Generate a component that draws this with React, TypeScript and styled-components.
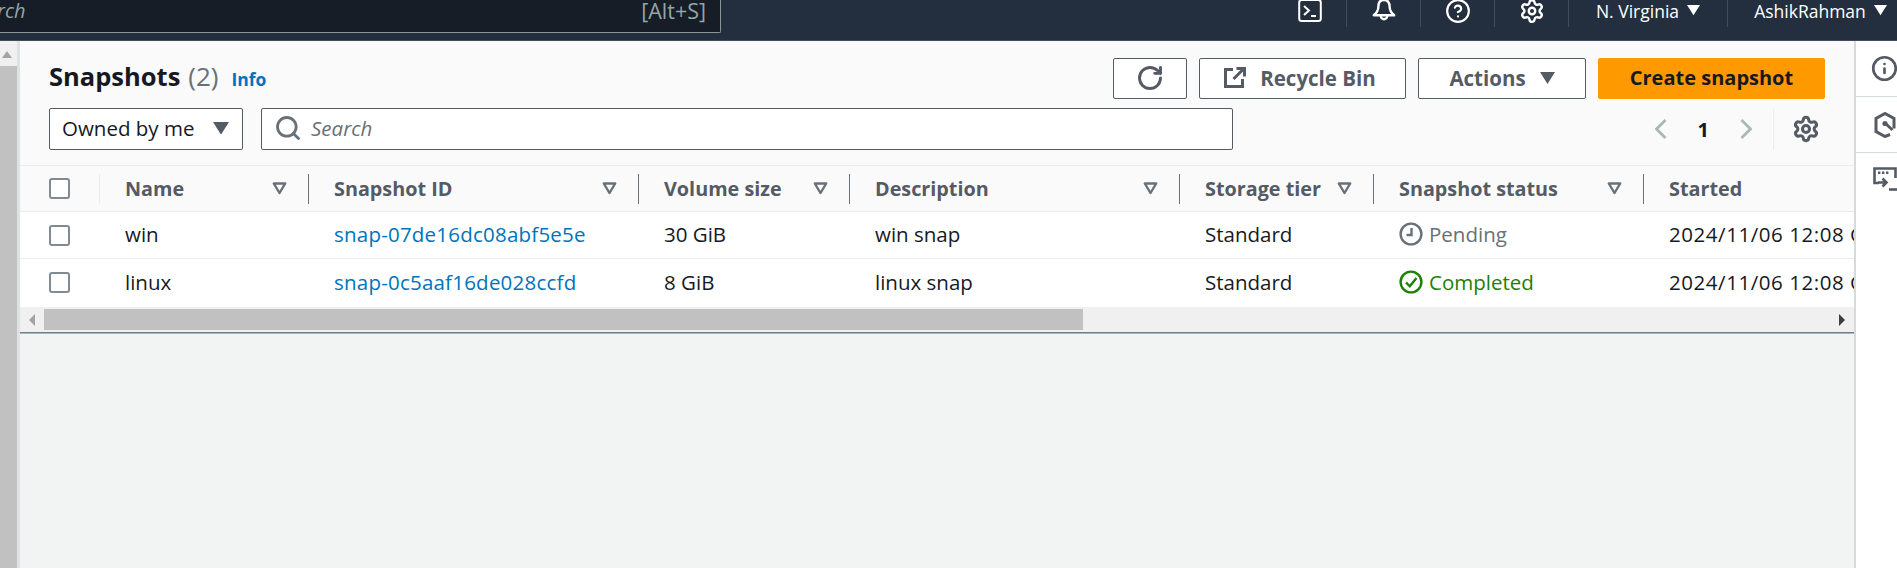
import React from "react";
import styled, { createGlobalStyle } from "styled-components";
import { RotateCw, Search, Settings, CircleHelp, Info } from "lucide-react";

const GlobalStyle = createGlobalStyle`
  html, body { margin: 0; padding: 0; height: 100%; background: #f2f3f3; }
  body { font-family: "Open Sans", "Noto Sans", sans-serif; overflow: hidden; }
  * { box-sizing: border-box; }
`;

const columns = [
  { title: "Name", width: 209, sortable: true },
  { title: "Snapshot ID", width: 330, sortable: true },
  { title: "Volume size", width: 211, sortable: true },
  { title: "Description", width: 330, sortable: true },
  { title: "Storage tier", width: 194, sortable: true },
  { title: "Snapshot status", width: 270, sortable: true },
  { title: "Started", width: 260, sortable: false },
];

const rows = [
  { name: "win", id: "snap-07de16dc08abf5e5e", size: "30 GiB", desc: "win snap", status: "pending" },
  { name: "linux", id: "snap-0c5aaf16de028ccfd", size: "8 GiB", desc: "linux snap", status: "completed" },
];

const Caret = ({ size = 14, color = "#545b64" }: { size?: number; color?: string }) => (
  <svg width={size} height={size * 0.8} viewBox="0 0 14 11">
    <path d="M0 0h14L7 11z" fill={color} />
  </svg>
);

const SortCaret = () => (
  <svg width="15" height="13" viewBox="0 0 15 13">
    <path d="M1.8 1.5h11.4L7.5 11z" fill="none" stroke="#687078" strokeWidth="2.4" strokeLinejoin="round" />
  </svg>
);

const PageChevron = ({ flip }: { flip?: boolean }) => (
  <svg width="12" height="20" viewBox="0 0 12 20" fill="none" stroke="#aab7b8" strokeWidth="2.8">
    <path d={flip ? "M1.5 1l9 9-9 9" : "M10.5 1l-9 9 9 9"} />
  </svg>
);

const TerminalIcon = () => (
  <svg width="24" height="24" viewBox="0 0 24 24" fill="none" stroke="#fff" strokeWidth="2">
    <rect x="1.2" y="1" width="21.6" height="21" rx="2.5" />
    <path d="M6 7l5 4.5L6 16M13 17h5" />
  </svg>
);

const BellIcon = () => (
  <svg width="24" height="24" viewBox="0 0 24 24" fill="none" stroke="#fff" strokeWidth="2.4">
    <path d="M12 1c-4 0-5.6 3-5.6 6.5 0 3.6-1.2 6-4.6 8.7h20.4c-3.4-2.7-4.6-5.1-4.6-8.7C17.6 4 16 1 12 1z" strokeLinejoin="round" />
    <path d="M8.8 17a3.2 3.2 0 0 0 6.4 0" />
  </svg>
);

const ExternalIcon = () => (
  <svg width="22" height="21" viewBox="0 0 22 21" fill="none" stroke="#545b64" strokeWidth="3">
    <path d="M9 2.5H1.5v17h17V12" />
    <path d="M9.5 12L19 2.5M12.5 1.5h8v8" />
  </svg>
);

const SnapshotPanelIcon = () => (
  <svg width="22" height="26" viewBox="0 0 22 26" fill="none" stroke="#545b64" strokeWidth="3">
    <path d="M16 22.5L11 24.5 2 19.5V6.5L11 1.5l9 5v10" />
    <path d="M11.5 11.5l7 6.5" />
    <circle cx="11" cy="11.5" r="2.6" fill="#545b64" stroke="none" />
  </svg>
);

const ShellPanelIcon = () => (
  <svg width="24" height="24" viewBox="0 0 24 24" fill="none" stroke="#545b64" strokeWidth="2.6">
    <path d="M6 16H1.5V1.5h21V11" />
    <path d="M5 15.5h8M9.5 11.5l4 4-4 4" />
    <path d="M16 22.5h8" />
    <path d="M5 5.8h2.4M9 5.8h2.4M13 5.8h2.4" strokeWidth="2.4" />
  </svg>
);

const ClockIcon = () => (
  <svg width="24" height="24" viewBox="0 0 24 24" fill="none" stroke="#687078" strokeWidth="2.4">
    <circle cx="12" cy="12" r="10.4" />
    <path d="M12.5 6v7H7.5" />
  </svg>
);

const CheckIcon = () => (
  <svg width="24" height="24" viewBox="0 0 24 24" fill="none" stroke="#1d8102" strokeWidth="2.4">
    <circle cx="12" cy="12" r="10.4" />
    <path d="M7 12.5l3.8 3.8L17.5 8" />
  </svg>
);

export default function App() {
  return (
    <>
      <GlobalStyle />
      <Page>
        <TopNav>
          <GlobalSearch>
            <SearchHint>rch</SearchHint>
            <Shortcut>[Alt+S]</Shortcut>
          </GlobalSearch>
          <NavActions>
            <NavIcon>
              <TerminalIcon />
            </NavIcon>
            <NavIcon>
              <BellIcon />
            </NavIcon>
            <NavIcon>
              <CircleHelp size={26} color="#fff" strokeWidth={2} />
            </NavIcon>
            <NavIcon>
              <Settings size={26} color="#fff" strokeWidth={2.2} />
            </NavIcon>
            <NavMenu $width={159}>
              N. Virginia <Caret size={13} color="#fff" />
            </NavMenu>
            <NavMenu $width={169} $last>
              AshikRahman <Caret size={13} color="#fff" />
            </NavMenu>
          </NavActions>
        </TopNav>
        <Body>
          <LeftScroll>
            <ScrollUp />
            <ScrollThumb />
          </LeftScroll>
          <Main>
            <Panel>
              <PanelHeader>
                <TitleRow>
                  <TitleBlock>
                    <Title>Snapshots</Title>
                    <Count>(2)</Count>
                    <InfoLink>Info</InfoLink>
                  </TitleBlock>
                  <Actions>
                    <Button $width={74}>
                      <RotateCw size={28} strokeWidth={2.5} />
                    </Button>
                    <RecycleButton $width={207} $size={20.5}>
                      <ExternalIcon />
                      Recycle Bin
                    </RecycleButton>
                    <Button $width={168} $size={20.5}>
                      Actions <Caret size={15} />
                    </Button>
                    <PrimaryButton>Create snapshot</PrimaryButton>
                  </Actions>
                </TitleRow>
                <FilterRow>
                  <OwnerSelect>
                    Owned by me <Caret size={16} />
                  </OwnerSelect>
                  <SearchBox>
                    <Search size={28} color="#687078" strokeWidth={2.4} />
                    <SearchPlaceholder>Search</SearchPlaceholder>
                  </SearchBox>
                  <Pager>
                    <PageChevron />
                    <PageNumber>1</PageNumber>
                    <PageChevron flip />
                    <PagerDivider />
                    <Settings size={28} color="#545b64" strokeWidth={2.6} />
                  </Pager>
                </FilterRow>
              </PanelHeader>
              <Table>
                <HeadRow>
                  <CheckCell $head>
                    <Checkbox />
                  </CheckCell>
                  {columns.map((col) => (
                    <HeadCell key={col.title} $width={col.width} $last={!col.sortable}>
                      {col.title}
                      {col.sortable && <SortCaret />}
                    </HeadCell>
                  ))}
                </HeadRow>
                {rows.map((row) => (
                  <Row key={row.id}>
                    <CheckCell>
                      <Checkbox />
                    </CheckCell>
                    <Cell $width={columns[0].width}>{row.name}</Cell>
                    <Cell $width={columns[1].width}>
                      <IdLink>{row.id}</IdLink>
                    </Cell>
                    <Cell $width={columns[2].width}>{row.size}</Cell>
                    <Cell $width={columns[3].width}>{row.desc}</Cell>
                    <Cell $width={columns[4].width}>Standard</Cell>
                    <Cell $width={columns[5].width}>
                      <Status $done={row.status === "completed"}>
                        {row.status === "completed" ? <CheckIcon /> : <ClockIcon />}
                        {row.status === "completed" ? "Completed" : "Pending"}
                      </Status>
                    </Cell>
                    <Cell $width={columns[6].width}>
                      <DateText>2024/11/06 12:08 GMT+6</DateText>
                    </Cell>
                  </Row>
                ))}
              </Table>
              <HScroll>
                <ArrowLeft />
                <HThumb />
                <ArrowRight />
              </HScroll>
            </Panel>
          </Main>
          <SideTools>
            <SideTool>
              <Info size={27} color="#545b64" strokeWidth={2.4} />
            </SideTool>
            <SideTool>
              <SnapshotPanelIcon />
            </SideTool>
            <SideTool>
              <ShellPanelIcon />
            </SideTool>
          </SideTools>
        </Body>
      </Page>
    </>
  );
}

const Page = styled.div`
  width: 1897px;
  height: 568px;
  display: flex;
  flex-direction: column;
  overflow: hidden;
`;

const TopNav = styled.header`
  height: 41px;
  flex: none;
  display: flex;
  justify-content: space-between;
  background: #232f3e;
  border-bottom: 1px solid #414d5c;
`;

const GlobalSearch = styled.div`
  width: 721px;
  height: 33px;
  display: flex;
  align-items: center;
  justify-content: space-between;
  padding: 0 14px 12px 0;
  background: #161d26;
  border: 1px solid #879596;
  border-width: 0 1px 1px 0;
  border-radius: 0 0 2px 0;
  color: #95a5a6;
  font-size: 21.5px;
`;

const SearchHint = styled.span`
  margin-left: -3px;
  font-size: 20px;
  font-style: italic;
`;

const Shortcut = styled.span``;

const NavActions = styled.div`
  display: flex;
  align-items: flex-start;
  height: 27px;
`;

const NavIcon = styled.div`
  width: 74px;
  height: 27px;
  padding-bottom: 6px;
  display: flex;
  align-items: center;
  justify-content: center;
  border-right: 1px solid #414d5c;
`;

const NavMenu = styled.div<{ $width: number; $last?: boolean }>`
  width: ${(p) => p.$width}px;
  height: 27px;
  padding: 0 0 6px ${(p) => (p.$last ? 16 : 0)}px;
  display: flex;
  align-items: center;
  justify-content: center;
  gap: 8px;
  color: #fff;
  font-size: 17.5px;
  white-space: nowrap;
  border-right: ${(p) => (p.$last ? "none" : "1px solid #414d5c")};
`;

const Body = styled.div`
  flex: 1;
  display: flex;
  min-height: 0;
`;

const LeftScroll = styled.div`
  width: 20px;
  flex: none;
  display: flex;
  flex-direction: column;
  background: #f0f0f0;
  border-right: 3px solid #dfe2e2;
`;

const ScrollUp = styled.div`
  height: 25px;
  flex: none;
  position: relative;
  &::after {
    content: "";
    position: absolute;
    left: 2px;
    top: 10px;
    border-left: 5.5px solid transparent;
    border-right: 5.5px solid transparent;
    border-bottom: 7px solid #a3a3a3;
  }
`;

const ScrollThumb = styled.div`
  flex: 1;
  background: #c1c1c1;
`;

const Main = styled.main`
  flex: 1;
  min-width: 0;
  background: #f2f3f3;
`;

const Panel = styled.section`
  background: #fff;
  border-bottom: 1px solid #6f7d8c;
  box-shadow: 0 1px 0 #aab7b8;
`;

const PanelHeader = styled.div`
  height: 125px;
  padding: 17px 29px 0 29px;
  background: #fafafa;
  border-bottom: 1px solid #eaeded;
`;

const TitleRow = styled.div`
  height: 41px;
  display: flex;
  align-items: center;
  justify-content: space-between;
`;

const TitleBlock = styled.div`
  display: flex;
  align-items: baseline;
  gap: 8px;
  margin-bottom: 6px;
`;

const Title = styled.h1`
  margin: 0;
  font-size: 25.5px;
  font-weight: 700;
  color: #16191f;
`;

const Count = styled.span`
  font-size: 26px;
  color: #687078;
`;

const InfoLink = styled.a`
  margin-left: 5px;
  font-size: 17.5px;
  font-weight: 700;
  color: #0073bb;
`;

const Actions = styled.div`
  display: flex;
  gap: 12px;
`;

const Button = styled.button<{ $width: number; $size?: number }>`
  width: ${(p) => p.$width}px;
  height: 41px;
  padding: 0 0 2px;
  display: flex;
  align-items: center;
  justify-content: center;
  gap: 14px;
  background: #fff;
  border: 1px solid #545b64;
  border-radius: 2px;
  color: #545b64;
  font-family: inherit;
  font-size: ${(p) => p.$size ?? 20}px;
  font-weight: 700;
`;

const RecycleButton = styled(Button)`
  padding-right: 5px;
`;

const PrimaryButton = styled.button`
  width: 227px;
  height: 41px;
  padding: 0 0 2px;
  background: #ff9900;
  border: 1px solid #ff9900;
  border-radius: 2px;
  color: #16191f;
  font-family: inherit;
  font-size: 20px;
  font-weight: 700;
`;

const FilterRow = styled.div`
  height: 42px;
  margin-top: 9px;
  display: flex;
  gap: 18px;
`;

const OwnerSelect = styled.div`
  width: 194px;
  display: flex;
  align-items: center;
  justify-content: space-between;
  padding: 0 13px 2px 12px;
  background: #fff;
  border: 1px solid #545b64;
  border-radius: 2px;
  color: #16191f;
  font-size: 20.5px;
  white-space: nowrap;
`;

const SearchBox = styled.div`
  width: 972px;
  display: flex;
  align-items: center;
  gap: 9px;
  padding: 0 12px 2px;
  background: #fff;
  border: 1px solid #545b64;
  border-radius: 2px;
`;

const SearchPlaceholder = styled.span`
  font-size: 20.5px;
  font-style: italic;
  color: #687078;
`;

const Pager = styled.div`
  flex: 1;
  display: flex;
  align-items: center;
  justify-content: flex-end;
  padding-right: 5px;
`;

const PageNumber = styled.span`
  margin: 0 31px;
  font-size: 20px;
  font-weight: 700;
  color: #16191f;
`;

const PagerDivider = styled.div`
  width: 1px;
  height: 41px;
  margin: 0 18px 0 21px;
  background: #eaeded;
`;

const Table = styled.div`
  overflow: hidden;
`;

const HeadRow = styled.div`
  height: 46px;
  display: flex;
  background: #fafafa;
  border-bottom: 1px solid #eaeded;
`;

const Row = styled.div`
  height: 47px;
  display: flex;
  background: #fff;
  border-bottom: 1px solid #eaeded;
  &:last-child {
    height: 48px;
    padding-bottom: 1px;
    border-bottom: none;
  }
`;

const CheckCell = styled.div<{ $head?: boolean }>`
  width: 80px;
  flex: none;
  display: flex;
  align-items: center;
  padding-left: 29px;
  position: relative;
  ${(p) =>
    p.$head &&
    `&::after {
      content: "";
      position: absolute;
      right: 0;
      top: 8px;
      bottom: 7px;
      width: 1px;
      background: #eaeded;
    }`}
`;

const Checkbox = styled.span`
  width: 21px;
  height: 21px;
  background: #fff;
  border: 2px solid #7f8a94;
  border-radius: 3px;
`;

const HeadCell = styled.div<{ $width: number; $last?: boolean }>`
  width: ${(p) => p.$width}px;
  flex: none;
  display: flex;
  align-items: center;
  justify-content: space-between;
  padding: 0 22px 0 25px;
  color: #545b64;
  font-size: 19.8px;
  font-weight: 700;
  position: relative;
  white-space: nowrap;
  ${(p) =>
    !p.$last &&
    `&::after {
      content: "";
      position: absolute;
      right: 0;
      top: 8px;
      bottom: 7px;
      width: 1px;
      background: #687078;
    }`}
`;

const Cell = styled.div<{ $width: number }>`
  width: ${(p) => p.$width}px;
  flex: none;
  display: flex;
  align-items: center;
  padding: 0 0 2px 25px;
  color: #16191f;
  font-size: 20.5px;
  white-space: nowrap;
`;

const IdLink = styled.a`
  color: #0073bb;
  letter-spacing: 0.22px;
`;

const DateText = styled.span`
  letter-spacing: 0.55px;
`;

const Status = styled.span<{ $done?: boolean }>`
  display: flex;
  align-items: center;
  gap: 6px;
  color: ${(p) => (p.$done ? "#1d8102" : "#687078")};
`;

const HScroll = styled.div`
  height: 25px;
  display: flex;
  align-items: center;
  background: #f0f0f0;
`;

const ArrowLeft = styled.span`
  width: 24px;
  flex: none;
  display: flex;
  justify-content: center;
  &::before {
    content: "";
    border-top: 6px solid transparent;
    border-bottom: 6px solid transparent;
    border-right: 6px solid #a3a3a3;
  }
`;

const HThumb = styled.div`
  width: 1039px;
  height: 21px;
  background: #c1c1c1;
`;

const ArrowRight = styled.span`
  margin-left: auto;
  width: 24px;
  flex: none;
  display: flex;
  justify-content: center;
  &::before {
    content: "";
    border-top: 6px solid transparent;
    border-bottom: 6px solid transparent;
    border-left: 6px solid #3c3c3c;
  }
`;

const SideTools = styled.aside`
  width: 43px;
  flex: none;
  background: #fff;
  border-left: 2px solid #d5dbdb;
`;

const SideTool = styled.div`
  height: 56px;
  display: flex;
  align-items: center;
  justify-content: center;
  padding-left: 16px;
  border-bottom: 1px solid #d5dbdb;
  svg {
    flex: none;
  }
  &:last-child {
    padding-bottom: 4px;
    border-bottom: none;
  }
`;
